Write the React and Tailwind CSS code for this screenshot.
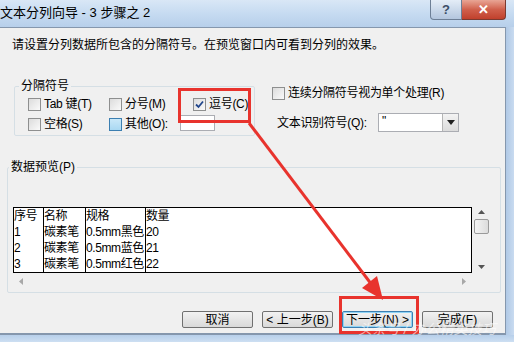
import React from 'react';

const font = { fontFamily: '"Liberation Sans", "Noto Sans CJK SC", sans-serif' };

const CheckBox = ({ checked, blue }) => (
  <span
    className={
      'inline-flex items-center justify-center w-[13px] h-[13px] border shrink-0 ' +
      (blue
        ? 'border-[#3c7fb1] bg-gradient-to-b from-[#c9e8f8] to-[#a9d8f2]'
        : 'border-[#8e8f8f] bg-gradient-to-br from-[#dcdcdc] to-[#fafafa]')
    }
  >
    {checked && (
      <svg width="9" height="9" viewBox="0 0 9 9">
        <path d="M1 4.5 L3.5 7 L8 1.5" fill="none" stroke="#21468c" strokeWidth="1.8" />
      </svg>
    )}
  </span>
);

const Check = ({ label, checked, blue, className = '' }) => (
  <div className={'flex items-center gap-[3px] h-[16px] ' + className}>
    <CheckBox checked={checked} blue={blue} />
    <span className="text-[12px] leading-none tracking-[-0.3px] text-black whitespace-nowrap">{label}</span>
  </div>
);

const Btn = ({ children, focus }) => (
  <div
    className={
      'w-[71px] h-[17px] flex items-center justify-center text-[12px] leading-none rounded-[2px] border bg-gradient-to-b from-[#f2f2f2] to-[#d9d9d9] ' +
      (focus ? 'border-[#3c7fb1] shadow-[inset_0_0_0_1px_#8fd3f5]' : 'border-[#707070]')
    }
  >
    {children}
  </div>
);

const rows = [
  ['序号', '名称', '规格', '数量'],
  ['1', '碳素笔', '0.5mm黑色', '20'],
  ['2', '碳素笔', '0.5mm蓝色', '21'],
  ['3', '碳素笔', '0.5mm红色', '22'],
];

export default function App() {
  return (
    <div className="relative w-[514px] h-[342px] overflow-hidden bg-[#bcd3ec] flex flex-col" style={font}>
      {/* title bar */}
      <div className="h-[27px] flex items-start bg-gradient-to-b from-[#d9e7f6] via-[#c6dbf1] to-[#b7cfea]">
        <div className="flex-1 pt-[5px] text-[13px] leading-[16px] text-black whitespace-nowrap">
          文本分列向导 - 3 步骤之 2
        </div>
        <div className="flex mr-[8px]">
          <div className="w-[32px] h-[20px] flex items-center justify-center border border-[#6d7f96] border-t-0 rounded-bl-[4px] bg-gradient-to-b from-[#e4edf7] to-[#b3c6de] text-[13px] font-bold text-[#3b4d66]">
            ?
          </div>
          <div className="w-[44px] h-[20px] flex items-center justify-center border border-[#7a3a30] border-t-0 border-l-0 rounded-br-[4px] bg-gradient-to-b from-[#e8a595] via-[#d0604c] to-[#c0402c] text-[13px] font-bold text-white">
            ✕
          </div>
        </div>
      </div>

      <div className="flex h-[308px]">
        {/* main panel */}
        <div className="w-[506px] bg-[#f0f0f0] border-t border-r border-[#8597ad] flex flex-col">
          <div className="mt-[9px] pl-[12px] text-[12px] leading-[16px] text-black whitespace-nowrap">
            请设置分列数据所包含的分隔符号。在预览窗口内可看到分列的效果。
          </div>

          <div className="flex mt-[25px]">
            <fieldset className="ml-[14px] w-[241px] h-[58px] border border-[#d5dfe5] rounded-[2px]">
              <legend className="ml-[4px] px-[2px] text-[12px] leading-[16px] text-black">分隔符号</legend>
              <div className="flex mt-[2px] pl-[13px]">
                <Check label="Tab 键(T)" className="w-[81px]" />
                <Check label="分号(M)" className="w-[84px]" />
                <Check label="逗号(C)" checked />
              </div>
              <div className="flex mt-[4px] pl-[13px]">
                <Check label="空格(S)" className="w-[81px]" />
                <Check label="其他(O):" blue />
                <div className="ml-[12px] w-[35px] h-[16px] bg-white border border-[#abadb3] -mt-[1px]" />
              </div>
            </fieldset>

            <div className="ml-[17px] flex flex-col">
              <Check label="连续分隔符号视为单个处理(R)" className="mt-[7px]" />
              <div className="flex items-center mt-[12px] ml-[5px]">
                <span className="text-[12px] leading-none tracking-[-0.3px] w-[101px] whitespace-nowrap">文本识别符号(Q):</span>
                <div className="w-[81px] h-[19px] bg-white border border-[#abadb3] flex">
                  <span className="flex-1 pl-[3px] text-[12px] leading-[14px]">"</span>
                  <div className="w-[16px] h-full flex items-center justify-center border-l border-[#b5b5b5] bg-gradient-to-b from-[#f3f3f3] to-[#dcdcdc]">
                    <svg width="8" height="5" viewBox="0 0 8 5">
                      <path d="M0 0 H8 L4 5 Z" fill="#222" />
                    </svg>
                  </div>
                </div>
              </div>
            </div>
          </div>

          <fieldset className="ml-[7px] w-[494px] h-[134px] mt-[23px] border border-[#d5dfe5] rounded-[2px]">
            <legend className="ml-[1px] px-[2px] text-[12px] leading-[16px] text-black">数据预览(P)</legend>
            <div className="flex ml-[5px] mt-[31px]">
              <div className="flex flex-col w-[459px]">
                <div className="h-[66px] bg-white border border-black flex mt-[1px]">
                  {[30, 42, 60, 325].map((w, ci) => (
                    <div
                      key={ci}
                      className={'flex flex-col ' + (ci < 3 ? 'border-r border-black' : '')}
                      style={{ width: w }}
                    >
                      {rows.map((r, ri) => (
                        <div key={ri} className="h-[16px] text-[12px] leading-[16px] tracking-[-0.4px] whitespace-nowrap text-black overflow-hidden">
                          {r[ci]}
                        </div>
                      ))}
                    </div>
                  ))}
                </div>
                <div className="h-[17px] flex items-center justify-between px-[6px] text-[#a0a0a0]">
                  <svg width="4" height="7" viewBox="0 0 4 7"><path d="M4 0 V7 L0 3.5 Z" fill="#a8a8a8" /></svg>
                  <svg width="4" height="7" viewBox="0 0 4 7"><path d="M0 0 V7 L4 3.5 Z" fill="#a8a8a8" /></svg>
                </div>
              </div>
              <div className="w-[18px] h-[68px] flex flex-col items-center bg-[#f0f0f0]">
                <svg width="7" height="4" viewBox="0 0 7 4" className="mt-[4px]"><path d="M0 4 H7 L3.5 0 Z" fill="#555" /></svg>
                <div className="mt-[5px] w-[15px] h-[15px] border border-[#9a9a9a] rounded-[2px] bg-gradient-to-r from-[#f4f4f4] to-[#dcdcdc]" />
                <div className="flex-1" />
                <svg width="7" height="4" viewBox="0 0 7 4" className="mb-[5px]"><path d="M0 0 H7 L3.5 4 Z" fill="#555" /></svg>
              </div>
            </div>
          </fieldset>

          <div className="flex justify-end gap-[9px] pr-[12px] mt-[18px]">
            <Btn>取消</Btn>
            <Btn>&lt; 上一步(B)</Btn>
            <Btn focus>下一步(N) &gt;</Btn>
            <Btn>完成(F)</Btn>
          </div>
          <div className="flex-1" />
          <div className="h-[2px] bg-[#8597ad]" />
        </div>
        <div className="flex-1 bg-gradient-to-r from-[#b0c9e6] to-[#c9dbf0]" />
      </div>
      <div className="flex-1 bg-gradient-to-b from-[#b7cfea] to-[#cddff2]" />

      {/* annotations */}
      <div className="absolute left-[178px] top-[88px] w-[73px] h-[35px] border-[3px] border-[#e8332d]" />
      <div className="absolute left-[339px] top-[296px] w-[80px] h-[38px] border-[3px] border-[#e8332d]" />
      <svg className="absolute left-0 top-0 pointer-events-none" width="514" height="342" viewBox="0 0 514 342">
        <line x1="249" y1="123" x2="372" y2="285" stroke="#e8332d" strokeWidth="3" />
        <polygon points="383,300 377,276 362,288" fill="#e8332d" />
      </svg>
      <div className="absolute left-[358px] top-[322px] text-[14px] italic leading-none text-white/60 whitespace-nowrap">
        头条号 / 办公精英技巧
      </div>
    </div>
  );
}
